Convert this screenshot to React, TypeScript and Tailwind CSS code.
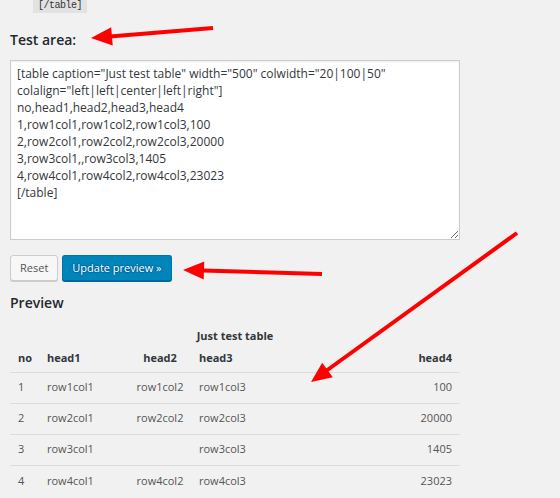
import React from 'react';

const rows = [
  ['1', 'row1col1', 'row1col2', 'row1col3', '100'],
  ['2', 'row2col1', 'row2col2', 'row2col3', '20000'],
  ['3', 'row3col1', '', 'row3col3', '1405'],
  ['4', 'row4col1', 'row4col2', 'row4col3', '23023'],
];

const source = `[table caption="Just test table" width="500" colwidth="20|100|50" colalign="left|left|center|left|right"]
no,head1,head2,head3,head4
1,row1col1,row1col2,row1col3,100
2,row2col1,row2col2,row2col3,20000
3,row3col1,,row3col3,1405
4,row4col1,row4col2,row4col3,23023
[/table]`;

function Arrows() {
  return (
    <svg className="absolute inset-0 pointer-events-none" width="560" height="498" viewBox="0 0 560 498">
      <g stroke="#ff0000" strokeWidth="4" strokeLinecap="butt" fill="#ff0000">
        <line x1="213" y1="28" x2="110" y2="36.5" />
        <polygon points="91,38 112.7,45.5 111.2,27.3" stroke="none" />
        <line x1="322" y1="274" x2="202" y2="270.5" />
        <polygon points="183,270 204.3,261.6 203.7,279.6" stroke="none" />
        <line x1="517" y1="233" x2="326" y2="371" />
        <polygon points="311,382 322.2,362.7 332.8,377.3" stroke="none" />
      </g>
    </svg>
  );
}

export default function App() {
  return (
    <div className="relative w-[560px] h-[498px] overflow-hidden bg-[#f1f1f1] text-[#444] font-['Open_Sans',sans-serif]">
      {/* tail of the usage example */}
      <div className="flex pl-[33px] h-[13px]">
        <code className="block bg-[#e2e2e2] px-[5px] h-[13px] leading-[11px] text-[10px] tracking-[-0.5px] text-[#333] font-['Liberation_Mono',monospace]">
          [/table]
        </code>
      </div>

      <h3 className="mt-[17px] ml-[10px] text-[14px] font-semibold leading-[20px] text-[#23282d]">Test area:</h3>

      <div className="mt-[10px] ml-[10px]">
        <textarea
          className="block w-[450px] h-[180px] bg-white border border-[#ccc] shadow-[inset_0_1px_2px_rgba(0,0,0,0.07)] px-[6px] py-[4px] text-[12px] leading-[17px] text-[#32373c] outline-none"
          defaultValue={source}
        />
      </div>

      <div className="mt-[15px] ml-[10px] flex gap-[4px]">
        <button className="h-[26px] px-[9px] rounded-[3px] border border-[#ccc] bg-[#f7f7f7] shadow-[0_1px_0_#ccc] text-[11px] text-[#555]">
          Reset
        </button>
        <button className="h-[26px] px-[9px] rounded-[3px] border border-[#0073aa] border-b-[#006799] bg-[#0085ba] shadow-[0_1px_0_#006799] text-[11px] text-white [text-shadow:0_-1px_1px_#006799,1px_0_1px_#006799,0_1px_1px_#006799,-1px_0_1px_#006799]">
          Update preview »
        </button>
      </div>

      <h3 className="mt-[12px] ml-[10px] text-[14px] font-semibold leading-[20px] text-[#23282d]">Preview</h3>

      <table className="mt-[13px] ml-[10px] w-[450px] table-fixed border-collapse text-[11px] text-[#555]">
        <caption className="h-[20px] leading-[20px] font-bold text-[#32373c]">Just test table</caption>
        <colgroup>
          <col className="w-[29px]" />
          <col className="w-[90px]" />
          <col className="w-[62px]" />
          <col className="w-[139px]" />
          <col />
        </colgroup>
        <thead>
          <tr className="h-[26px] border-b border-[#dcdcdc] font-bold text-[#32373c]">
            <th className="pl-[8px] pb-[5px] align-bottom text-left">no</th>
            <th className="pl-[8px] pb-[5px] align-bottom text-left">head1</th>
            <th className="pb-[5px] align-bottom text-center">head2</th>
            <th className="pl-[8px] pb-[5px] align-bottom text-left">head3</th>
            <th className="pr-[8px] pb-[5px] align-bottom text-right">head4</th>
          </tr>
        </thead>
        <tbody>
          {rows.map((r, i) => (
            <tr key={r[0]} className={i < rows.length - 1 ? 'h-[31px] border-b border-[#dcdcdc]' : 'h-[31px]'}>
              <td className="pl-[8px] text-left">{r[0]}</td>
              <td className="pl-[8px] text-left">{r[1]}</td>
              <td className="text-center">{r[2]}</td>
              <td className="pl-[8px] text-left">{r[3]}</td>
              <td className="pr-[8px] text-right">{r[4]}</td>
            </tr>
          ))}
        </tbody>
      </table>

      <Arrows />
    </div>
  );
}
